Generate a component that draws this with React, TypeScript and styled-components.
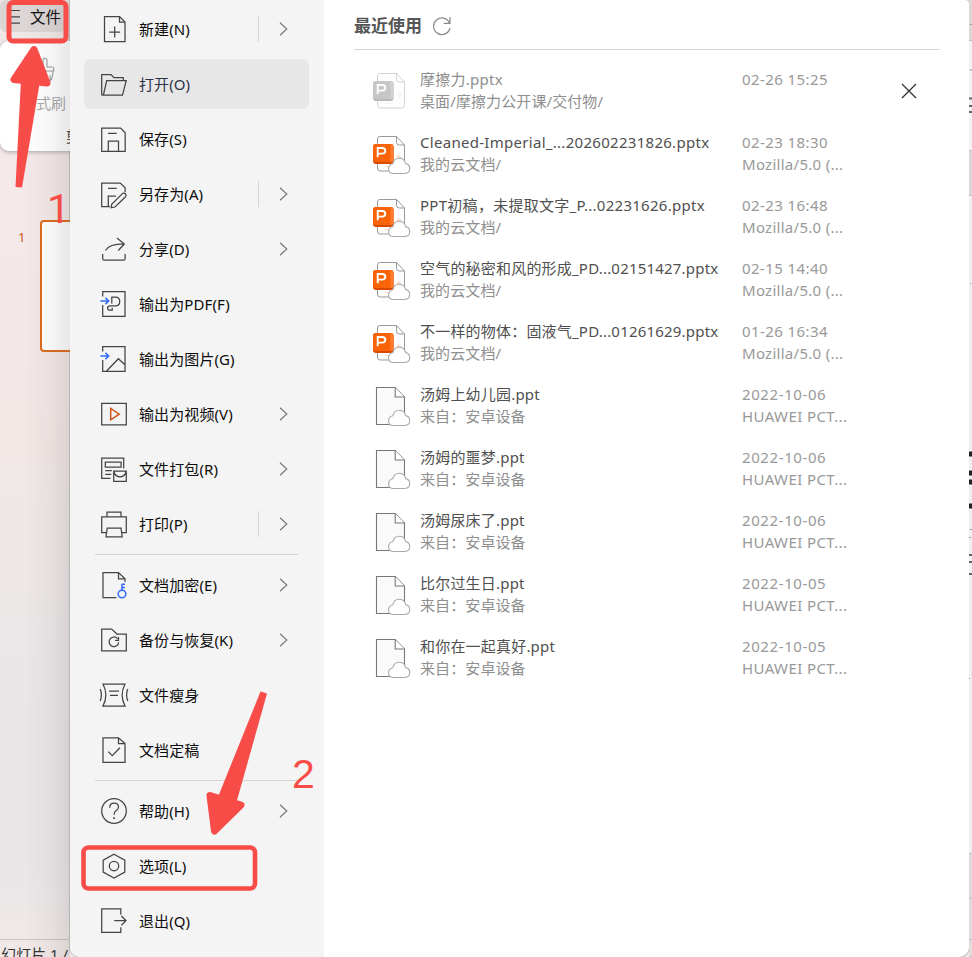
import React from "react";
import styled, { createGlobalStyle } from "styled-components";

const latin = `"Noto Sans", "Noto Sans CJK SC", sans-serif`;

const Global = createGlobalStyle`
  * { box-sizing: border-box; }
  html, body { margin: 0; padding: 0; }
  body { width: 972px; height: 957px; overflow: hidden; font-family: ${latin}; background: #eee8e7; }
`;

const Screen = styled.div`
  position: relative;
  display: flex;
  width: 972px;
  height: 957px;
  overflow: hidden;
  background: linear-gradient(180deg, #efe7e7 0, #f3e9e8 190px, #f1e8e6 450px, #e9e6e8 720px, #e9e6e8 860px, #f1e9e7 957px);
`;

const Backdrop = styled.aside`
  position: relative;
  display: flex;
  flex-direction: column;
  width: 70px;
  flex: none;
  overflow: hidden;
  &::after {
    content: "";
    position: absolute;
    inset: 0;
    background: linear-gradient(90deg, rgba(90, 80, 80, 0) 25px, rgba(90, 80, 80, 0.05) 50px, rgba(90, 80, 80, 0.14) 70px);
  }
`;

const FileTab = styled.div`
  display: flex;
  align-items: center;
  gap: 9px;
  width: 66px;
  height: 32px;
  padding: 2px 0 0 9px;
  border-radius: 6px;
  background: #dbd6d5;
  font-size: 15.5px;
  line-height: 20px;
  white-space: nowrap;
  color: #111;
`;

const Ribbon = styled.div`
  display: flex;
  flex-direction: column;
  width: 90px;
  height: 110px;
  margin-top: 9px;
  padding: 15px 0 0 36px;
  border-radius: 9px;
  background: #fff;
  box-shadow: 0 1px 4px rgba(0, 0, 0, 0.3);
`;

const RibbonLabel = styled.span<{ $dark?: boolean }>`
  margin: ${(p) => (p.$dark ? "13px 0 0 30px" : "9px 0 0")};
  font-size: 15px;
  line-height: 20px;
  white-space: nowrap;
  color: ${(p) => (p.$dark ? "#444" : "#aaa")};
`;

const Thumbnails = styled.div`
  display: flex;
  margin-top: 69px;
  padding-left: 18px;
`;

const SlideNumber = styled.span`
  width: 22px;
  flex: none;
  padding-top: 8px;
  font-size: 13px;
  line-height: 18px;
  color: #c55a11;
`;

const Slide = styled.div`
  width: 120px;
  height: 132px;
  flex: none;
  border: 2px solid #dc6a1c;
  border-radius: 4px;
  background: #fff;
`;

const StatusBar = styled.div`
  margin-top: auto;
  height: 18px;
  padding: 4px 0 0 1px;
  border-top: 1px solid #c9c3c2;
  font-size: 15px;
  line-height: 20px;
  white-space: nowrap;
  color: #333;
`;

const Panel = styled.div`
  display: flex;
  width: 899px;
  height: 957px;
  flex: none;
  overflow: hidden;
  border-radius: 0 4px 10px 10px;
  background: #fff;
  box-shadow: 0 0 0 1px #c6c4c4;
`;

const Menu = styled.nav`
  display: flex;
  flex-direction: column;
  gap: 5px;
  width: 254px;
  flex: none;
  padding: 4px 15px 0 14px;
  background: #f4f4f4;
`;

const MenuRow = styled.div<{ $active?: boolean }>`
  display: flex;
  align-items: center;
  height: 50px;
  flex: none;
  padding: 0 20px 0 16px;
  border-radius: 7px;
  background: ${(p) => (p.$active ? "#e7e7e7" : "transparent")};
  color: ${(p) => (p.$active ? "#2b3448" : "#0c0c0c")};
`;

const MenuIcon = styled.svg`
  width: 28px;
  height: 28px;
  flex: none;
  overflow: visible;
  fill: none;
  stroke: #444;
  stroke-width: 1.25;
`;

const MenuLabel = styled.span`
  flex: 1;
  margin-left: 11px;
  padding-bottom: 1px;
  font-size: 15px;
  line-height: 24px;
  letter-spacing: 0.1px;
  white-space: nowrap;
`;

const SplitLine = styled.i`
  width: 1px;
  height: 26px;
  margin-right: 20px;
  background: #d5d5d5;
`;

const Chevron = styled.svg`
  width: 9px;
  height: 14px;
  margin-right: 1px;
  fill: none;
  stroke: #7a7a7a;
  stroke-width: 1.2;
`;

const Separator = styled.hr`
  width: 203px;
  height: 1px;
  flex: none;
  margin: 0 0 0 11px;
  border: 0;
  background: #d4d4d4;
`;

const Recent = styled.main`
  display: flex;
  flex-direction: column;
  flex: 1;
  padding: 0 29px 0 30px;
`;

const Heading = styled.header`
  display: flex;
  align-items: center;
  gap: 10px;
  height: 50px;
  margin-bottom: 13px;
  padding-top: 2px;
  border-bottom: 1px solid #d6d6d6;
`;

const Title = styled.h1`
  margin: 0;
  font-size: 17px;
  line-height: 24px;
  font-weight: 700;
  color: #555;
`;

const FileRow = styled.div<{ $faded?: boolean }>`
  display: flex;
  height: 63px;
  padding-top: 6px;
  color: ${(p) => (p.$faded ? "#8d8d8d" : "#505050")};
`;

const FileIcon = styled.svg`
  width: 46px;
  height: 48px;
  margin-left: 20px;
  flex: none;
  overflow: visible;
`;

const Column = styled.div<{ $width: number }>`
  display: flex;
  flex-direction: column;
  width: ${(p) => p.$width}px;
  flex: none;
  margin-top: -1px;
`;

const Line = styled.span<{ $tone?: string; $track?: number }>`
  font-size: 15px;
  line-height: 22px;
  white-space: pre;
  letter-spacing: ${(p) => p.$track ?? 0}px;
  color: ${(p) => p.$tone ?? "inherit"};
`;

const CloseIcon = styled.svg`
  width: 16px;
  height: 16px;
  margin: 14px 0 0 39px;
  stroke: #333;
  stroke-width: 1.3;
`;

const RightEdge = styled.aside`
  display: flex;
  flex-direction: column;
  width: 3px;
  flex: none;
`;

const EdgeBlock = styled.div<{ $h: number; $c: string }>`
  height: ${(p) => p.$h}px;
  flex: none;
  border-bottom: 1px solid #c4c0c0;
  background: ${(p) => p.$c};
`;

const EdgeMarks = styled.svg`
  position: absolute;
  right: 0;
  top: 0;
  width: 3px;
  height: 957px;
`;

const Annotations = styled.svg`
  position: absolute;
  inset: 0;
  width: 972px;
  height: 957px;
  pointer-events: none;
`;

const icons: Record<string, React.ReactNode> = {
  create: <><path d="M4.5 1.5h15l5.5 5.5v19.5h-20.5z" /><path d="M19.5 1.5V7H25M14.7 11.5v11M9.2 17h11" /></>,
  open: <path d="M1.7 25.2V4.5h9.3l3 3.2h9.3v3M1.7 25.2h20.8l3.7-14.5H6.7L3.4 25.2" />,
  save: <path d="M1.7 3h19l4.5 4.7v18.6H1.7zM8 8.4h8.7M8.3 26.3V16h10.2v10.3" />,
  saveAs: <><path d="M10 26.5H1.7V3h18.6l4.8 4.7v4.6M8 8.4h8.7M8.3 26.5V16H16" /><path d="M11.7 24.2 22.4 13.6q1.5-1.2 3 .2 1.4 1.4.1 2.9L15 27l-3.8.7z" /></>,
  share: <path d="M2.7 19v4.4q0 1.8 1.8 1.8h18.8q1.8 0 1.8-1.8V19M5.5 15.5Q9.5 8.9 23.8 9M17 3l7.3 6-6 6.5" />,
  pdf: <><path d="M2.7 6.5V1.7H25v24.6H2.7V15" /><path d="M11.8 13.6V7h3.6q4.3 0 4.3 4.4t-4.3 4.4h-5.2q-2.6 0-2.6 2.2t2.4 2.2h2.2v-2.5" /><path stroke="#3569f5" strokeWidth="1.5" d="M.4 11h8M5.4 7.9 8.7 11l-3.3 3.1" /></>,
  image: <><path d="M2.7 6.5V1.7H25v24.6H2.7V15M6.6 26 18.4 13.7l6.5 6" /><path stroke="#3569f5" strokeWidth="1.5" d="M.4 11h8M5.4 7.9 8.7 11l-3.3 3.1" /></>,
  video: <><path d="M1.7 3.4h24.6v21.4H1.7z" /><path stroke="#cf571e" strokeWidth="1.5" d="M10.7 8.5v11.4l8.5-5.7z" /></>,
  pack: <><path d="M10.5 23.4H1.7V3h22v10.4M5.3 7h15.8v5H5.3zM5.3 15.5h6.5M5.3 19.4h6" /><path d="M13.7 16h12.6v10.4H13.7zM14 17q1.5 4.8 6 4.8t6-4.8" /></>,
  print: <path d="M7 6.5V2h14v4.5M6.5 22.7H1.7V6.8h24.6v15.9h-4.8M6.6 18h15.2M7.2 18l-1.2 8.8h16.2L21 18" />,
  encrypt: <><path d="M16.5 26.7H3V1.6h15.5L25 7.8V11M18.5 1.6v6.2H25" /><g stroke="#3569f5" strokeWidth="1.5"><circle cx="22" cy="23" r="3.8" /><path d="M22 19.2v-6.5M22 13.2h3M22 16.6h3" /></g></>,
  backup: <><path d="M1.7 3h10l5.3 5h9.3v16.8H1.7z" /><path d="M17.5 12.6a4.8 4.8 0 1 0 1.2 3.6M18.5 11v3.3h-3.5" /></>,
  slim: <path d="M3 3h22q-5.7 11 0 22H3q5.7-11 0-22zM9 10h10M10 14.3h8M.2 8q2.4 6 0 12M27.8 8q-2.4 6 0 12" />,
  final: <path d="M3 1.8h15.5L25 7.6v18.8H3zM18.5 1.8v5.8H25M8.3 15.6l4 4 7.6-7.8" />,
  help: <><circle cx="14" cy="14" r="12.3" /><path d="M9.7 10.8q0-4.8 4.4-4.8t4.4 4q0 2.1-2.3 3.6-2.1 1.4-2.1 4.2" /><path d="M14.1 20.3v1.8" strokeWidth="1.7" /></>,
  options: <><path d="M14 2.2 24.8 8.2v11.9L14 26.1 3.2 20.1V8.2z" /><circle cx="14" cy="14.1" r="4.7" /></>,
  exit: <path d="M20.8 7.7V1.8H1.7v23.6h19.1v-5.2M14.2 13.6h11.6M21.4 9l4.6 4.6-4.6 4.6" />,
};

type Entry = { icon: string; label: string; arrow?: boolean; split?: boolean; active?: boolean } | null;

const entries: Entry[] = [
  { icon: "create", label: "新建(N)", arrow: true, split: true },
  { icon: "open", label: "打开(O)", active: true },
  { icon: "save", label: "保存(S)" },
  { icon: "saveAs", label: "另存为(A)", arrow: true, split: true },
  { icon: "share", label: "分享(D)", arrow: true },
  { icon: "pdf", label: "输出为PDF(F)" },
  { icon: "image", label: "输出为图片(G)" },
  { icon: "video", label: "输出为视频(V)", arrow: true },
  { icon: "pack", label: "文件打包(R)", arrow: true },
  { icon: "print", label: "打印(P)", arrow: true, split: true },
  null,
  { icon: "encrypt", label: "文档加密(E)", arrow: true },
  { icon: "backup", label: "备份与恢复(K)", arrow: true },
  { icon: "slim", label: "文件瘦身" },
  { icon: "final", label: "文档定稿" },
  null,
  { icon: "help", label: "帮助(H)", arrow: true },
  { icon: "options", label: "选项(L)" },
  { icon: "exit", label: "退出(Q)" },
];

type Doc = { kind: "local" | "cloud" | "plain"; name: string; track: number; place: string; time: string; device: string };

const docs: Doc[] = [
  { kind: "local", name: "摩擦力.pptx", track: 0.25, place: "桌面/摩擦力公开课/交付物/", time: "02-26 15:25", device: "" },
  { kind: "cloud", name: "Cleaned-Imperial_...202602231826.pptx", track: 0.29, place: "我的云文档/", time: "02-23 18:30", device: "Mozilla/5.0 (..." },
  { kind: "cloud", name: "PPT初稿，未提取文字_P...02231626.pptx", track: 0.28, place: "我的云文档/", time: "02-23 16:48", device: "Mozilla/5.0 (..." },
  { kind: "cloud", name: "空气的秘密和风的形成_PD...02151427.pptx", track: 0.2, place: "我的云文档/", time: "02-15 14:40", device: "Mozilla/5.0 (..." },
  { kind: "cloud", name: "不一样的物体：固液气_PD...01261629.pptx", track: 0.2, place: "我的云文档/", time: "01-26 16:34", device: "Mozilla/5.0 (..." },
  { kind: "plain", name: "汤姆上幼儿园.ppt", track: 0.2, place: "来自：安卓设备", time: "2022-10-06", device: "HUAWEI PCT..." },
  { kind: "plain", name: "汤姆的噩梦.ppt", track: 0.2, place: "来自：安卓设备", time: "2022-10-06", device: "HUAWEI PCT..." },
  { kind: "plain", name: "汤姆尿床了.ppt", track: 0.2, place: "来自：安卓设备", time: "2022-10-06", device: "HUAWEI PCT..." },
  { kind: "plain", name: "比尔过生日.ppt", track: 0.2, place: "来自：安卓设备", time: "2022-10-05", device: "HUAWEI PCT..." },
  { kind: "plain", name: "和你在一起真好.ppt", track: 0.2, place: "来自：安卓设备", time: "2022-10-05", device: "HUAWEI PCT..." },
];

function DocIcon({ kind }: { kind: Doc["kind"] }) {
  const local = kind === "local";
  const cloud = (
    <path d="M19.5 41.5q-4.9 0-4.9-4.6 0-4.2 4.2-5.1 1.2-5.6 6.4-5.6 5.1 0 6.5 5.4 4 .7 4 5 0 4.9-4.9 4.9z" fill="#fff" stroke="#aaa" strokeWidth="1.1" />
  );
  if (kind === "plain") {
    return (
      <FileIcon viewBox="0 0 46 48">
        <path d="M2.5 3.5h18.7l9.3 9.5v27.5h-28z" fill="#fafafa" stroke="#777" strokeWidth="1.1" />
        <path d="M21.2 3.5V13h9.3" fill="#fff" stroke="#777" strokeWidth="1.1" />
        {cloud}
      </FileIcon>
    );
  }
  const edge = local ? "#d2d2d2" : "#999";
  return (
    <FileIcon viewBox="0 0 46 48">
      <path d="M5.5 4.5h17l8 8.5V36q0 3-3 3H6q-2.5 0-2.5-3V7q0-2.5 2-2.5z" fill="#fefefe" stroke={edge} />
      <path d="M22.5 4.5v5.7q0 2.8 2.8 2.8h5.2" fill="none" stroke={edge} />
      <path d="M11 34.6h6" stroke={local ? "#eee" : "#fbdccb"} />
      <circle cx="25" cy="26" r="2.5" fill={local ? "#f4f4f4" : "#fddcc9"} />
      <rect x="-1" y="12" width="20.5" height="20" rx="3" fill={local ? "#b9b9b9" : "#d94a00"} />
      <rect x="-1" y="12" width="20.5" height="18" rx="3" fill={local ? "#c7c7c7" : "#fa6308"} />
      <path d="M16.5 12q3 0 3 3v12q0 3-3 3z" fill={local ? "#d2d2d2" : "#ff7d30"} />
      <path d="M3.7 25.3v-9.3h4.5q3.1 0 3.1 2.8t-3.1 2.8H4" fill="none" stroke="#fff" strokeWidth="1.9" />
      {!local && cloud}
    </FileIcon>
  );
}

export default function App() {
  return (
    <Screen>
      <Global />
      <Backdrop>
        <FileTab>
          <svg width="12" height="16" viewBox="0 0 12 16" stroke="#444" strokeWidth="1.2"><path d="M0 1.5h11M0 7.8h11M0 14.2h11" /></svg>
          文件
        </FileTab>
        <Ribbon>
          <svg width="22" height="28" viewBox="0 0 22 28" fill="none" stroke="#999" strokeWidth="1.1">
            <path d="M7 11V4.5q0-2.3 2-2.3t2 2.3V11h5.2q1.6 0 1.6 2v2H2v-2q0-2 2-2zM3 15v5q0 6 5 6.5h4q5-2 5-11.5M13 26q2-3 1-7" />
          </svg>
          <RibbonLabel>式刷</RibbonLabel>
          <RibbonLabel $dark>剪</RibbonLabel>
        </Ribbon>
        <Thumbnails>
          <SlideNumber>1</SlideNumber>
          <Slide />
        </Thumbnails>
        <StatusBar>幻灯片 1 /</StatusBar>
      </Backdrop>

      <Panel>
        <Menu>
          {entries.map((e, i) =>
            e ? (
              <MenuRow key={i} $active={e.active}>
                <MenuIcon viewBox="0 0 28 28">{icons[e.icon]}</MenuIcon>
                <MenuLabel>{e.label}</MenuLabel>
                {e.split && <SplitLine />}
                {e.arrow && <Chevron viewBox="0 0 9 14"><path d="M1 .7 7.8 7 1 13.3" /></Chevron>}
              </MenuRow>
            ) : (
              <Separator key={i} />
            )
          )}
        </Menu>

        <Recent>
          <Heading>
            <Title>最近使用</Title>
            <svg width="20" height="20" viewBox="0 0 20 20" fill="none" stroke="#888" strokeWidth="1.2">
              <path d="M17.6 7.2A8.3 8.3 0 1 0 18 12M18 1v6.3h-6.3" />
            </svg>
          </Heading>
          {docs.map((d, i) => (
            <FileRow key={i} $faded={d.kind === "local"}>
              <DocIcon kind={d.kind} />
              <Column $width={322}>
                <Line $track={d.track}>{d.name}</Line>
                <Line $tone="#8f8f8f" $track={0.1}>{d.place}</Line>
              </Column>
              <Column $width={120}>
                <Line $tone="#999" $track={d.kind === "plain" ? 0.6 : 0.42}>{d.time}</Line>
                <Line $tone="#999" $track={d.kind === "plain" ? 0.4 : 0.28}>{d.device}</Line>
              </Column>
              {d.kind === "local" && <CloseIcon viewBox="0 0 16 16"><path d="M1 1l14 14M15 1 1 15" /></CloseIcon>}
            </FileRow>
          ))}
        </Recent>
      </Panel>

      <RightEdge>
        <EdgeBlock $h={41} $c="#ddd6d7" />
        <EdgeBlock $h={110} $c="#f3f1f1" />
        <EdgeBlock $h={45} $c="#ded7d9" />
        <EdgeBlock $h={658} $c="#f0f0f0" />
        <EdgeBlock $h={45} $c="#ded9da" />
        <EdgeBlock $h={41} $c="#e0dbdc" />
        <EdgeBlock $h={17} $c="#e2dddd" />
      </RightEdge>
      <EdgeMarks viewBox="0 0 3 957">
        <path d="M0 454h3M0 473h3M0 482h3M0 506h3" stroke="#222" strokeWidth="5" />
        <path d="M0 98.5h3M0 106h3M0 112h3M0 555h3M0 562h3M0 574h3" stroke="#666" strokeWidth="2" />
        <path d="M1 24.5h2M1 70h2M1 283.5h1M1 529.5h2M0 537.5h2M0 678.5h1" stroke="#999" />
      </EdgeMarks>

      <Annotations viewBox="0 0 972 957" fill="#f84c48" stroke="#f84c48">
        <rect x="9" y="2.5" width="57" height="38.5" rx="4" fill="none" strokeWidth="5" />
        <rect x="83.5" y="847.5" width="171.5" height="41" rx="5" fill="none" strokeWidth="4.6" />
        <path d="M34 49.5 14 79.5 47 83z" strokeWidth="7" strokeLinejoin="round" />
        <path d="M21 80 15.5 187 22 187.5 39.5 84z" stroke="none" />
        <path d="M214.5 831 210 795.5 241 805z" strokeWidth="7" strokeLinejoin="round" />
        <path d="M218 797 260.5 691.5 267 693.5 236 804z" stroke="none" />
        <g stroke="none" fontSize="41">
          <text x="47" y="222.5" fontFamily="Roboto, sans-serif">1</text>
          <text x="292" y="788" fontFamily="Liberation Sans, sans-serif">2</text>
        </g>
      </Annotations>
    </Screen>
  );
}
